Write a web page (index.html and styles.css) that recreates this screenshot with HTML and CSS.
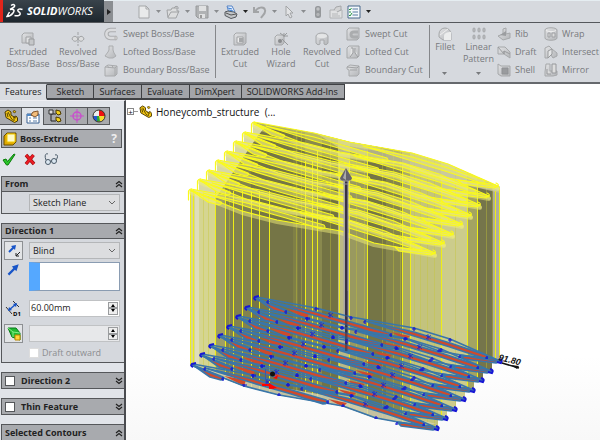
FILE: index.html
```html
<!DOCTYPE html>
<html lang="en">
<head>
<meta charset="utf-8">
<title>SOLIDWORKS</title>
<link rel="stylesheet" href="styles.css">
</head>
<body>
<svg class="defs" aria-hidden="true">
  <defs>
    <linearGradient id="ig" x1="0" y1="0" x2="1" y2="1"><stop offset="0" stop-color="#e2e3e5"/><stop offset="1" stop-color="#b4b6b9"/></linearGradient>
    <symbol id="part" viewBox="0 0 14 14"><path d="M1 3 4 1l3 2v3l3 2 2-1 1.500 2v3l-3 1.500L2 8.500z" fill="#f3c613" stroke="#4d3a00"/><path d="m4 3 3 6 2 2.500M3 4l1 4m6 1v3M9 8l3 1" fill="none" stroke="#5a4600"/><path d="m9 2 2-.500 1 1.500-2 1z" fill="#f3c613" stroke="#4d3a00" stroke-width=".7"/></symbol>
    <symbol id="down" viewBox="0 0 8 8"><path d="m1 1 3 2.500L7 1M1 4l3 2.500L7 4" fill="none" stroke="#222" stroke-width="1.200"/></symbol>
    <symbol id="up" viewBox="0 0 8 8"><path d="m1 4 3-2.500L7 4M1 7l3-2.500L7 7" fill="none" stroke="#222" stroke-width="1.200"/></symbol>
    <symbol id="chev" viewBox="0 0 8 6"><path d="m1 1 3 3 3-3" fill="none" stroke="#666"/></symbol>
    <symbol id="tri" viewBox="0 0 6 4"><path d="M0 0h5L2.500 3z" fill="currentColor"/></symbol>
  </defs>
</svg>

<header class="topbar">
  <div class="brand">
    <svg class="ds" viewBox="0 0 18 17"><g fill="none" stroke="#fff" stroke-width="1.500"><path d="M5 2.500c3-2 5 0 2.500 2L4 6.500c4-1 5 1 3 3.500-1.500 2-4 3.500-6 3.500l2.500-4.500"/><path d="M16.500 6.500c-2.500-1-5.500-.500-4.500 1.500l2 2c1 2-2 3.500-5.500 2.500"/></g></svg>
    <span class="name"><b>SOLID</b>WORKS</span>
  </div>
  <button class="handle" aria-label="Expand menu"><svg viewBox="0 0 4 6"><path d="m0 0 4 3-4 3z" fill="#222"/></svg></button>
  <nav class="quick" aria-label="Quick access">
    <button aria-label="New"><svg viewBox="0 0 14 14"><path d="M2 1h7l3 3v9H2z" fill="#e9eaeb" stroke="#a5a7a9"/><path d="M9 1v3h3" fill="none" stroke="#a5a7a9"/></svg></button>
    <button class="arrow" aria-label="New options"><svg><use href="#tri"/></svg></button>
    <button aria-label="Open"><svg viewBox="0 0 14 14"><path d="M1 5h4l1-2h5v3h2l-3 7H2z" fill="#dcddde" stroke="#a0a2a4"/><path d="m2 12 3-5h8M8 3c1-2 3-2 4-1v2" fill="none" stroke="#a0a2a4"/></svg></button>
    <button class="arrow" aria-label="Open options"><svg><use href="#tri"/></svg></button>
    <button aria-label="Save"><svg viewBox="0 0 14 14"><path d="M1 1h12v12H3l-2-2z" fill="#b0b2b4" stroke="#989a9c"/><path d="M4 1h7v5H4zM4 9h6v4H4z" fill="#e0e1e2"/><path d="M5 10h2v3H5z" fill="#999"/></svg></button>
    <button class="arrow" aria-label="Save options"><svg><use href="#tri"/></svg></button>
    <button aria-label="Print"><svg viewBox="0 0 14 14"><path d="M3 1h5l3 6-6 1z" fill="#e6f0ff" stroke="#5583c5"/><path d="m1 7 3-1 6 1 3 2-1 3-5 1.500-6-3z" fill="#c2c5c8" stroke="#53575c"/><path d="m4 3 4 1M5 5l4 1" stroke="#347bd2"/><path d="m2 8 5 2 5-1" fill="none" stroke="#555"/></svg></button>
    <button class="arrow dark" aria-label="Print options"><svg><use href="#tri"/></svg></button>
    <button aria-label="Undo"><svg viewBox="0 0 14 14"><path d="M1 2v5h5M2 7c2-5 9-6 10-2 1 3-2 5-4 8" fill="none" stroke="#a2a4a6" stroke-width="2"/></svg></button>
    <button class="arrow" aria-label="Undo options"><svg><use href="#tri"/></svg></button>
    <button aria-label="Select"><svg viewBox="0 0 14 14"><path d="M4 1v10l2-2 2 4 2-1-2-4h3z" fill="#e2e3e5" stroke="#a2a4a6"/></svg></button>
    <button class="arrow" aria-label="Select options"><svg><use href="#tri"/></svg></button>
    <button aria-label="Rebuild"><svg viewBox="0 0 14 14"><rect x="4" y="1" width="6" height="12" rx="2.500" fill="#95989b"/><circle cx="7" cy="4" r="1.700" fill="#c0c2c4"/><circle cx="7" cy="9.500" r="1.700" fill="#b4b6b8"/></svg></button>
    <button class="gapped" aria-label="File properties"><svg viewBox="0 0 14 14"><path d="M1 5h12v8H1z" fill="#e0e1e2" stroke="#b0b2b4"/><path d="m5 5 2-3 5-1v4l-4 2" fill="#d2d3d4" stroke="#a5a7a9"/><path d="M3 9h6m-6 2h8" stroke="#b5b7b9"/></svg></button>
    <button class="gapped" aria-label="Options"><svg viewBox="0 0 14 14"><path d="M1 1h12v12H1z" fill="#f5f9fc" stroke="#48698b"/><path d="M5.500 4H11M5.500 7H11m-5.500 3H11" stroke="#577aa0"/><path d="m2 4 1 1 1.500-2M2 7h2M2 10l1 1 2-3" fill="none" stroke="#23963c"/></svg></button>
    <button class="arrow dark" aria-label="Options list"><svg><use href="#tri"/></svg></button>
  </nav>
</header>

<section class="ribbon" aria-label="Features commands">
  <div class="group boss">
    <button class="big"><svg viewBox="0 0 14 14"><path d="m1 3 2-2h9v8l-2 2H1z" fill="url(#ig)" stroke="#a6a8aa"/><path d="M5 5h5v6H5z" fill="#e0e1e2" stroke="#a0a2a4"/><path d="M8 7h5v6H8z" fill="#c5c7c9" stroke="#989a9c"/></svg>Extruded<br>Boss/Base</button>
    <button class="big"><svg viewBox="0 0 14 14"><path d="M7 0v14" stroke="#a0a2a4" stroke-dasharray="3 1"/><path d="M1 7c1-4 5-3 6 0 1-3 5-4 6 0-2 3-4 3-6 0-2 3-4 3-6 0z" fill="#dcddde" stroke="#a0a2a4"/></svg>Revolved<br>Boss/Base</button>
    <div class="small">
      <button><svg viewBox="0 0 14 14"><path d="M12 3H6.500C1 3 1 11 6.500 11H12" fill="none" stroke="#abadaf" stroke-width="4.500"/><path d="M12 3H6.500C1 3 1 11 6.500 11H12" fill="none" stroke="#dadbdd" stroke-width="2.500"/><ellipse cx="12" cy="11" rx="1" ry="2" fill="#eee" stroke="#aaa"/></svg>Swept Boss/Base</button>
      <button><svg viewBox="0 0 14 14"><path d="M5 1h4v4l1 3 2 3-3 2H5l-4-2 3-4 1-2z" fill="url(#ig)" stroke="#abadaf"/></svg>Lofted Boss/Base</button>
      <button><svg viewBox="0 0 14 14"><path d="m1 4 3-2 9 1v8l-2 2H1z" fill="url(#ig)" stroke="#a8aaac"/><path d="m1 4 10 1 2-2m-2 2v8M3 2l2 3m3-3 1 3" fill="none" stroke="#a8aaac"/></svg>Boundary Boss/Base</button>
    </div>
  </div>
  <div class="group cut">
    <button class="big"><svg viewBox="0 0 14 14"><path d="m1 3 2-2h10v10l-2 2H1z" fill="url(#ig)" stroke="#a6a8aa"/><path d="M4 5h6v6H4z" fill="#eee" stroke="#a0a2a4"/><path d="M6 6h4v4H6z" fill="#a5a7a9"/></svg>Extruded<br>Cut</button>
    <button class="big"><svg viewBox="0 0 14 14"><path d="m1 5 2-2h7v8l-2 2H1z" fill="url(#ig)" stroke="#a6a8aa"/><circle cx="6" cy="9" r="2" fill="#888a8c"/><path d="m8 7 6 6M10 1v4m3-4-3 3m0 0-4-3m4 3h4" stroke="#989a9c"/></svg>Hole<br>Wizard</button>
    <button class="big"><svg viewBox="0 0 14 14"><path d="M1 4c1-4 11-4 12 0v7c-1 2-3 2-4 1V8H5v4c-1 1-3 1-4-1z" fill="url(#ig)" stroke="#a6a8aa"/><ellipse cx="7" cy="4" rx="5" ry="2" fill="#e4e5e6"/></svg>Revolved<br>Cut</button>
    <div class="small">
      <button><svg viewBox="0 0 14 14"><path d="m1 3 2-2h10v10l-2 2H1z" fill="url(#ig)" stroke="#a6a8aa"/><path d="M12 5H8C4 5 4 10 8 10h4" fill="none" stroke="#aaacae" stroke-width="3"/></svg>Swept Cut</button>
      <button><svg viewBox="0 0 14 14"><path d="m1 3 2-2h10v10l-2 2H1z" fill="url(#ig)" stroke="#a6a8aa"/><path d="M5 3h2v5l-3 4M9 3v5l3 4" fill="#e5e6e7" stroke="#999b9d"/></svg>Lofted Cut</button>
      <button><svg viewBox="0 0 14 14"><path d="m1 4 3-2 9 1v8l-2 2H3V7L1 6z" fill="url(#ig)" stroke="#a8aaac"/><path d="m1 4 10 1 2-2M4 7h7" fill="none" stroke="#a0a2a4"/></svg>Boundary Cut</button>
    </div>
  </div>
  <div class="group feat">
    <button class="big high"><svg viewBox="0 0 14 14"><path d="M1 7a6 6 0 0 1 12 0v6H5L1 10z" fill="url(#ig)" stroke="#a6a8aa"/><path d="M6 13V9c0-3 3-4 7-4v8z" fill="#eceded"/><path d="m2 8 8-6" stroke="#eee"/></svg>Fillet<svg class="more"><use href="#tri"/></svg></button>
    <button class="big high"><svg viewBox="0 0 14 14"><g fill="#bdbfc1" stroke="#a5a7aa"><rect x="1" y="1" width="2" height="4" rx="1"/><rect x="6" y="1" width="2" height="4" rx="1"/><rect x="11" y="1" width="2" height="4" rx="1"/><rect x="1" y="8" width="2" height="4" rx="1"/><rect x="6" y="8" width="2" height="4" rx="1"/><rect x="11" y="8" width="2" height="4" rx="1"/></g></svg>Linear<br>Pattern<svg class="more"><use href="#tri"/></svg></button>
    <div class="small">
      <button><svg viewBox="0 0 14 14"><path d="m1 9 5-2V2l3-1v6l4-1v5l-7 2z" fill="url(#ig)" stroke="#a6a8aa"/><path d="m3 8 6-4v5z" fill="#9b9da0"/></svg>Rib</button>
      <button><svg viewBox="0 0 14 14"><path d="M1 2h7l5 5v6L7 9H1z" fill="url(#ig)" stroke="#a6a8aa"/><path d="m1 2 6 7V6l6 3M7 9v-3" fill="none" stroke="#999b9d"/></svg>Draft</button>
      <button><svg viewBox="0 0 14 14"><path d="m1 1 3 2h9v10H4l-3-2z" fill="url(#ig)" stroke="#a6a8aa"/><path d="M5 5h6v6H5z" fill="#999b9e" stroke="#8f9194"/></svg>Shell</button>
    </div>
    <div class="small">
      <button><svg viewBox="0 0 14 14"><path d="M1 3c0-3 12-3 12 0v8c0 3-12 3-12 0z" fill="url(#ig)" stroke="#a6a8aa"/><path d="M4 6v4h2V6zm4 0h3v4H8z" fill="#ddd" stroke="#9fa1a4"/><path d="M2 3.500c2 1.500 8 1.500 10 0" fill="none" stroke="#eee"/></svg>Wrap</button>
      <button><svg viewBox="0 0 14 14"><path d="M1 5V3l4-2 3 3 5 4v3l-4 2-2-3-3 3H1z" fill="url(#ig)" stroke="#a6a8aa"/><path d="m4 6 4-2v5l-4 4z" fill="#e5e6e7" stroke="#999b9d"/></svg>Intersect</button>
      <button><svg viewBox="0 0 14 14"><path d="M2 1h4v7h7v4L9 13H1V9z" fill="url(#ig)" stroke="#a6a8aa"/><path d="M8 1h4v9H8zM3 6v5h4" fill="#ddd" stroke="#96989b"/></svg>Mirror</button>
    </div>
  </div>
</section>

<nav class="tabs" aria-label="Command tabs">
  <button class="on">Features</button><button>Sketch</button><button>Surfaces</button><button>Evaluate</button><button>DimXpert</button><button>SOLIDWORKS Add-Ins</button>
</nav>

<main class="work">
  <aside class="panel">
    <div class="ptabs">
      <button aria-label="Feature tree"><svg viewBox="0 0 14 14"><use href="#part"/></svg></button>
      <button class="on" aria-label="Properties"><svg viewBox="0 0 14 14"><path d="M1 4h12v9H1z" fill="#fff" stroke="#365f91"/><path d="M1 4h12v2H1z" fill="#5088c5"/><path d="M3 8h2m2 0h4m-8 3h2m2 0h4" stroke="#587faa"/><path d="m5 5 2-3 5-1v4L9 7z" fill="#f3bd7b" stroke="#83552b"/></svg></button>
      <button aria-label="Configurations"><svg viewBox="0 0 14 14"><path d="M3 1v11h5M3 5h5" fill="none" stroke="#222"/><path d="M1 1h4v4H1z" fill="#ddd" stroke="#333"/><path d="m8 1 4 1 1 3-3 1-2-2zm0 7 4 1 1 3-3 1-2-2z" fill="#f2d11d" stroke="#4d3a00"/></svg></button>
      <button aria-label="DimXpert manager"><svg viewBox="0 0 14 14"><path d="M7 0v14M0 7h14" stroke="#c94fcd"/><circle cx="7" cy="7" r="4" fill="none" stroke="#c94fcd" stroke-width="1.500"/></svg></button>
      <button aria-label="Display manager"><svg viewBox="0 0 14 14"><circle cx="7" cy="7" r="6" fill="#f5db30"/><path d="M7 7V1a6 6 0 0 1 6 6z" fill="#e11"/><path d="M7 7V1a6 6 0 0 0-6 6z" fill="#eee"/><path d="M7 7H1a6 6 0 0 0 4 5.500z" fill="#2655d4"/><path d="M7 7h-2v5.500h3z" fill="#28a53a"/><circle cx="7" cy="7" r="6" fill="none" stroke="#333"/></svg></button>
    </div>
    <h1 class="ptitle"><svg viewBox="0 0 14 14"><path d="m1 4 3-3h9v9l-3 3H1z" fill="#e0a900" stroke="#6b5000"/><path d="M4 2h8v8H4z" fill="#fffbc8" stroke="#f0c800"/></svg>Boss-Extrude<button aria-label="Help">?</button></h1>
    <div class="acts">
      <button aria-label="OK"><svg viewBox="0 0 14 14"><path d="m1 8 3-1 1.500 2.500L12 2l1 .500L6 13H4.500z" fill="#2bc52b" stroke="#087b08"/></svg></button>
      <button aria-label="Cancel"><svg viewBox="0 0 14 14"><path d="m3 3 8 9M10.500 3 3 12" stroke="#9a1111" stroke-width="3.500"/><path d="m3 3 8 9M10.500 3 3 12" stroke="#ed1c24" stroke-width="2"/></svg></button>
      <button aria-label="Preview"><svg viewBox="0 0 14 14"><g fill="#dbe8f2" stroke="#4a5a68"><circle cx="4" cy="10" r="2.500"/><circle cx="10" cy="9" r="2.500"/></g><path d="M2 8C0 3 2 1 4 2m8 6c3-4 1-6-1-5M6.500 9h1" fill="none" stroke="#4a5a68"/></svg></button>
    </div>

    <section class="box from">
      <h2><label for="from">From</label><svg><use href="#up"/></svg></h2>
      <div class="body row"><span></span><span class="pick"><select id="from"><option>Sketch Plane</option></select><svg><use href="#chev"/></svg></span></div>
    </section>

    <section class="box dir">
      <h2>Direction 1<svg><use href="#up"/></svg></h2>
      <div class="body">
        <div class="row"><button class="tool" aria-label="Reverse direction"><svg viewBox="0 0 14 14"><path d="m2 8 5-5" stroke="#1855c8" stroke-width="2"/><path d="m4 2 5-1-1 5z" fill="#1855c8"/><path d="m13 8-4 4m0-3v3h3" fill="none" stroke="#222"/></svg></button><span class="pick"><select aria-label="End condition"><option>Blind</option></select><svg><use href="#chev"/></svg></span></div>
        <div class="row tall"><svg class="ic" viewBox="0 0 14 14"><path d="m3 11 6-6" stroke="#1855c8" stroke-width="2"/><path d="m6 4 6-2-2 6z" fill="#1855c8"/></svg><select class="list" size="2" aria-label="Direction of extrusion"></select></div>
        <div class="row gap"><label class="ic" for="depth"><svg viewBox="0 0 16 16"><path d="m1 7 6 7M8 1l6 6" stroke="#333"/><path d="m4 10 7-6" stroke="#1855c8" stroke-width="1.500"/><path d="m3 11 1-4 3 3zm9-8-4 1 3 3z" fill="#1855c8"/><text x="8" y="15.500">D1</text></svg></label><span class="spin"><input id="depth" value="60.00mm"><span><button aria-label="Increase"><svg viewBox="0 0 6 4"><path d="m1 4 2-3 2 3z"/></svg></button><button aria-label="Decrease"><svg viewBox="0 0 6 4"><path d="m1 0 2 3 2-3z"/></svg></button></span></span></div>
        <div class="row"><button class="tool" aria-label="Draft on/off"><svg viewBox="0 0 14 14"><path d="M1 1h8l4 5v7L5 10z" fill="#22ba32" stroke="#08791a"/><path d="m1 1 5 4 7 1M6 5v5" fill="none" stroke="#83ed86"/><path d="M8 8h5v5H8z" fill="#ffd43b" stroke="#b98600"/></svg></button><span class="spin off"><input aria-label="Draft angle" disabled><span><button aria-label="Increase angle"><svg viewBox="0 0 6 4"><path d="m1 4 2-3 2 3z"/></svg></button><button aria-label="Decrease angle"><svg viewBox="0 0 6 4"><path d="m1 0 2 3 2-3z"/></svg></button></span></span></div>
        <label class="check"><input type="checkbox" disabled>Draft outward</label>
      </div>
    </section>

    <section class="box"><h2><label><input type="checkbox">Direction 2</label><svg><use href="#down"/></svg></h2></section>
    <section class="box"><h2><label><input type="checkbox">Thin Feature</label><svg><use href="#down"/></svg></h2></section>
    <section class="box last"><h2>Selected Contours<svg><use href="#up"/></svg></h2></section>
  </aside>

  <section class="view">
    <div class="tree"><button aria-label="Expand tree">+</button><i></i><svg viewBox="0 0 14 14"><use href="#part"/></svg><span>Honeycomb_structure&nbsp; (...</span></div>
    <svg class="model" viewBox="126 118 474 322" preserveAspectRatio="xMinYMin meet" role="img" aria-label="Honeycomb extrusion preview">
      <defs>
        <clipPath id="body"><path d="M190 189H199V179H208V170H217V160H226V151H235V141H244V132H253V121L314 132 350 141 412 152 448 163 500 186V361H492V370H483V380H474V389H465V399H456V408H447V418H438V428L375 417 342 405 278 394 243 385 190 364z"/></clipPath>
        <g id="blades">
          <path d="M256 297 286 309q2 2-2 3l-11-3z"/>
          <path d="M268 300l48 11 35 10 38 11q3 4-3 4L351 325 316 315z"/>
          <path d="M365 320l49 11 36 11 36 12q3 4-3 3L450 346 414 335z"/>
          <path d="M460 354l34 4 6 2-4 2-32-4z"/>
        </g>
        <g id="walls">
          <path d="M256 296 316 307 351 316 414 327 450 338 500 360"/>
          <path d="M256 298 307 318 342 327 406 338 439 350 500 361"/>
        </g>
        <g id="nodes">
          <path d="M286 309v4m-2-2h3M268 299v4m-2-2h2M316 306v4m-2-2h5M307 316v3m-2-2h5M351 315v4m-2-2h4M342 325v3m-2-1h4M365 319v4m-2-2h2M391 332v4m-2-2h3M414 326v4m-2-2h4M406 336v3m-2-1h4M450 337v4m-2-2h4M439 348v3m-2-1h4M460 354v3m-2-1h2M487 355v3m-2-1h3"/>
          <path d="M256 299q-3-1-1-3l4-1M499 358q4 1 2 4l-4-1" stroke-width="2"/>
          <path d="m328 312 5 4m0-4-5 4m2-5v6M426 334l5 4m0-4-5 4m2-5v6" stroke-width=".7"/>
        </g>
      </defs>
      <g clip-path="url(#body)">
        <path d="M185 118h320v322H185z" fill="#929255"/>
        <path d="M190 118h26v322h-26z" fill="#d5d592"/><path d="M195 118h4v322h-4z" fill="#dedebb"/>
        <path d="M216 118h9v322h-9z" fill="#9e9e67"/><path d="M225 118h26v322h-26z" fill="#83834f"/><path d="M251 118h54v322h-54z" fill="#757547"/>
        <path d="M293 118h5v322h-5z" fill="#808047"/><path d="M305 118h17v322h-17z" fill="#89894f"/><path d="M322 118h16v322h-16z" fill="#737344"/>
        <path d="M338 118h12v322h-12z" fill="#bbba85"/><path d="M350 118h18v322h-18z" fill="#999960"/><path d="M368 118h18v322h-18z" fill="#767647"/>
        <path d="M386 118h16v322h-16z" fill="#85854d"/><path d="M402 118h8v322h-8z" fill="#abab68"/><path d="M410 118h31v322h-31z" fill="#c4c47d"/>
        <path d="M441 118h26v322h-26z" fill="#cccc8d"/><path d="M467 118h10v322h-10z" fill="#a3a363"/><path d="M477 118h16v322h-16z" fill="#76764b"/><path d="M493 118h8v322h-8z" fill="#b0af9c"/>
        <path d="M203.500 118v322m5-322v322m21-322v322m67-322v322m5-322v322m29-322v322m26-322v322m8-322v322m18-322v322m11-322v322m7-322v322m14-322v322m6-322v322m7-322v322m7-322v322m21-322v322m31-322v322m6-322v322" stroke="#c5c539" stroke-width="1" opacity=".4"/>
        <path d="M310 128 500 180v12l-60-14-32-14-64-14z" fill="#c9c8a4" opacity=".7"/>
        <path d="M190 187 253 121l12 5-8 10-42 62z" fill="#d8d8a5"/>
        <path d="M190.500 188v252M193.500 189v251M215.500 190v250M225.500 190v250M233.500 190v250M242.500 190v250M251.500 190v250M259.500 190v250M269.500 190v250M305.500 160v280M312.500 160v280M317.500 150v290M339.500 160v280M349.500 160v280M367.500 150v290M402.500 165v275M410.500 180v260M441.500 180v260M467.500 183v257M477.500 180v260M495.500 190v250M499.500 186v254" stroke="#eeee17" stroke-width="1"/>
        <path d="M192 365l51 12 35 9 63 11 33 12 63 14-35-1-72-15-67-14z" fill="#d8d5b6" opacity=".8"/>
      </g>
      <g class="top">
        <g id="lid"><use href="#walls" class="band" x="-2" y="-173"/><use href="#blades" x="-2" y="-175"/><use href="#walls" x="-2" y="-175"/><path d="M251.500 132v-9q1-2 3-2M498 185q1-2-2-3"/></g>
        <use href="#lid" x="-9" y="10"/><use href="#lid" x="-18" y="19"/><use href="#lid" x="-27" y="29"/><use href="#lid" x="-36" y="38"/><use href="#lid" x="-45" y="48"/><use href="#lid" x="-54" y="57"/><use href="#lid" x="-63" y="67"/>
      </g>
      <path d="M343.500 180h5v170h-5z" fill="#aaa5a5"/><path d="M345 178h2.500v174H345z" fill="#393344"/><path d="m346 167-6 10q0 3 6 3t6-3z" fill="#66636c"/><path d="m346 168-3 9 3 2z" fill="#aaa"/><path d="M343 180h5M343 183h5" stroke="#999"/>
      <g class="base">
        <g id="floor"><path d="M287 308 309 312 307 318zM391 331 410 335 406 339z" stroke="none"/><use href="#blades"/><use href="#walls"/></g>
        <use href="#floor" x="-9" y="10"/><use href="#floor" x="-18" y="19"/><use href="#floor" x="-27" y="29"/><use href="#floor" x="-36" y="38"/><use href="#floor" x="-45" y="48"/><use href="#floor" x="-54" y="57"/><use href="#floor" x="-63" y="67"/>
      </g>
      <path d="M345 290h2.500v60H345z" fill="#393344" opacity=".6"/>
      <g class="nodes">
        <use href="#nodes"/><use href="#nodes" x="-9" y="10"/><use href="#nodes" x="-18" y="19"/><use href="#nodes" x="-27" y="29"/><use href="#nodes" x="-36" y="38"/><use href="#nodes" x="-45" y="48"/><use href="#nodes" x="-54" y="57"/><use href="#nodes" x="-63" y="67"/>
      </g>
      <path d="M265.500 368v18" stroke="#3f57a8"/><path d="M262 384h8m4 3-5-1" stroke="red" stroke-width="2"/><path d="m269 382 8 5-8 1zM273 377l5-3-1 4z" fill="red"/><circle cx="272.500" cy="373" r="2.500" fill="#111"/>
      <path d="m502 362 17 5" stroke="#111" stroke-width="1.500"/><path d="m511 364 8 1-2 3z" fill="#111"/>
      <text class="dim" x="498" y="359" transform="rotate(14 498 359)">91.80</text>
    </svg>
  </section>
</main>
</body>
</html>
```
FILE: styles.css
```css
* { box-sizing: border-box; }
body { margin: 0; min-height: 100vh; display: flex; flex-direction: column; overflow: hidden; background: #fff; font: 9px/12px "Open Sans", "Noto Sans", sans-serif; color: #222; }
button, input, select { font: inherit; color: inherit; margin: 0; padding: 0; border: 0; background: none; border-radius: 0; }
button { display: flex; align-items: center; justify-content: center; }
svg { display: block; flex: none; width: 14px; height: 14px; }
h1, h2 { margin: 0; font: inherit; font-weight: bold; }
.defs { position: absolute; width: 0; height: 0; }

.topbar { display: flex; height: 23px; background: #d6d9de; border-top: 1px solid #e5edf1; border-bottom: 1px solid #55585c; }
.brand { display: flex; align-items: center; width: 104px; margin-top: -1px; padding-left: 3px; border-left: 3px solid #e1251b; background: linear-gradient(#39434b, #1d262d); }
.ds { width: 18px; height: 17px; }
.name { margin-left: 3px; color: #fff; font: italic 11px/14px "Open Sans", sans-serif; }
.handle { width: 9px; background: #8b8e92; }
.handle svg { width: 4px; height: 6px; }
.quick { display: flex; align-items: center; padding-left: 23px; color: #8a8c8f; }
.quick button { width: 15px; height: 20px; }
.quick .arrow { width: 14px; padding-left: 2px; }
.quick .arrow svg { width: 6px; height: 4px; }
.quick .dark { color: #222; }
.quick .gapped { margin-left: 3px; }

.ribbon { display: flex; height: 61px; background: #d6d9de; border-bottom: 2px solid #66696d; color: #787a7d; overflow: hidden; }
.group { display: grid; flex: none; margin: 2px 0 4px; border-right: 1px solid #85878a; }
.boss { grid-template-columns: 56px 44px 115px; }
.cut { grid-template-columns: 48px 34px 48px 83px; }
.feat { grid-template-columns: 30px 37px 47px 60px; border: 0; }
.big { flex-direction: column; justify-content: flex-start; padding-top: 7px; text-align: center; white-space: nowrap; }
.big.high { position: relative; padding-top: 2px; }
.more { position: absolute; bottom: 3px; width: 6px; height: 4px; }
.small { display: grid; grid-template-rows: repeat(3, 18px); padding-left: 4px; }
.small button { justify-content: flex-start; gap: 5px; white-space: nowrap; }
.cut .small, .feat .small { padding-left: 0; }
.feat .small button { gap: 4px; }

.tabs { display: flex; height: 16px; }
.tabs button { min-width: 47px; padding: 0 5px; border: 1px solid #3f4144; border-width: 1px 1px 2px 0; background: #a3a5a9; white-space: nowrap; }
.tabs button:not(.on):not(:nth-child(2)) { padding: 0 6px 0 5px; }
.tabs .on { background: #d9dce1; border-color: #d9dce1 #3f4144 #d9dce1 #d9dce1; }

.work { display: flex; flex: 1; }
.panel { flex: none; width: 126px; padding-top: 6px; background: #e1e4e9; border-top: 1px solid #efeff3; border-right: 2px solid #4a4c50; }
.ptabs { display: flex; height: 18px; }
.ptabs button { width: 22px; border: 1px solid #56585b; border-left: 0; background: #a8aaae; }
.ptabs .on { background: #e1e4e9; border-bottom: 0; }
.ptitle { display: flex; align-items: center; height: 19px; margin: 4px 2px 0 1px; padding: 0 4px 0 1px; border: 1px solid #55575a; background: #aaacb0; gap: 3px; }
.ptitle button { margin-left: auto; color: #eee; font-size: 12px; font-weight: bold; }
.acts { display: flex; gap: 7px; padding: 4px 2px 0; height: 28px; }
.acts button { height: 14px; }
.box { margin: 0 0 9px 1px; border: 1px solid #55575a; border-right: 0; background: #d5d8dd; }
.box h2 { display: flex; align-items: center; justify-content: space-between; height: 15px; padding: 0 1px 0 3px; background: #a8aaae; border-bottom: 1px solid #55575a; }
.box h2:last-child { border: 0; }
.box h2 svg { width: 8px; height: 8px; }
.box h2 label { display: flex; align-items: center; gap: 6px; }
.last { margin-bottom: 0; }
.row { display: grid; grid-template-columns: 19px 91px; gap: 6px; align-items: center; padding-left: 2px; min-height: 18px; }
.from .body { padding: 2px 0 2px 2px; }
.dir .body { padding: 2px 0 2px; }
.pick { position: relative; display: flex; }
.pick select { appearance: none; width: 100%; height: 17px; padding: 0 3px; background: #dcdddf; border: 1px solid #b4b6b8; }
.pick svg { position: absolute; right: 4px; top: 6px; width: 8px; height: 6px; pointer-events: none; }
.tool { width: 19px; height: 19px; background: #e2e4e6; border: 1px solid #8d9093; }
.tall { margin-top: 2px; align-items: start; }
.ic { display: grid; justify-items: center; width: 16px; height: 16px; margin-left: 1px; }
.ic svg { width: 16px; height: 16px; }
.ic text { font: bold 6px "Noto Sans", sans-serif; }
.list { width: 91px; height: 29px; background: #fff; border: 1px solid #8a9cb2; border-left: 11px solid #55a8ff; overflow: hidden; appearance: none; }
.gap { margin: 8px 0 7px; }
.spin { display: flex; height: 17px; background: #fff; border: 1px solid #c0c2c4; }
.spin input { flex: 1; min-width: 0; padding-left: 1px; }
.spin > span { display: grid; width: 12px; padding: 1px; }
.spin button { border: 1px solid #9a9c9e; background: #eee; }
.spin button svg { width: 6px; height: 4px; }
.off { background: #e7e8ea; }
.check { display: flex; align-items: center; gap: 3px; height: 17px; padding: 2px 0 0 27px; color: #8b8d90; }
input[type="checkbox"] { appearance: none; width: 10px; height: 10px; background: #fff; border: 1px solid #55575a; }
.check input[type="checkbox"] { border-color: #ddd; }

.view { flex: 1; min-width: 0; background: linear-gradient(#fff 75%, #f8f8f8); }
.tree { display: flex; align-items: center; height: 19px; padding: 4px 0 0 1px; font-size: 10px; color: #111; white-space: nowrap; }
.tree button { width: 7px; height: 7px; border: 1px solid #888; font-size: 8px; line-height: 5px; }
.tree i { width: 4px; border-top: 1px solid #999; }
.tree svg { margin: 0 4px 0 1px; width: 13px; height: 13px; }
.model { width: 100%; height: auto; }
.top { fill: #eeec6c; fill-opacity: .5; stroke: #fafa1c; stroke-width: 1.2; stroke-linejoin: round; }
.top .band { stroke: #efee7a; stroke-width: 4; stroke-opacity: .5; }
#lid, #floor { stroke-linecap: round; }
#lid > path, #walls { fill: none; }
.base { fill: #cf4a2b; stroke: #3976aa; stroke-width: 1.7; stroke-linejoin: round; }
.nodes { fill: none; stroke: #1717d5; stroke-width: 1.2; }
.dim { font: italic bold 9px "Liberation Sans", sans-serif; fill: #111; }
```
